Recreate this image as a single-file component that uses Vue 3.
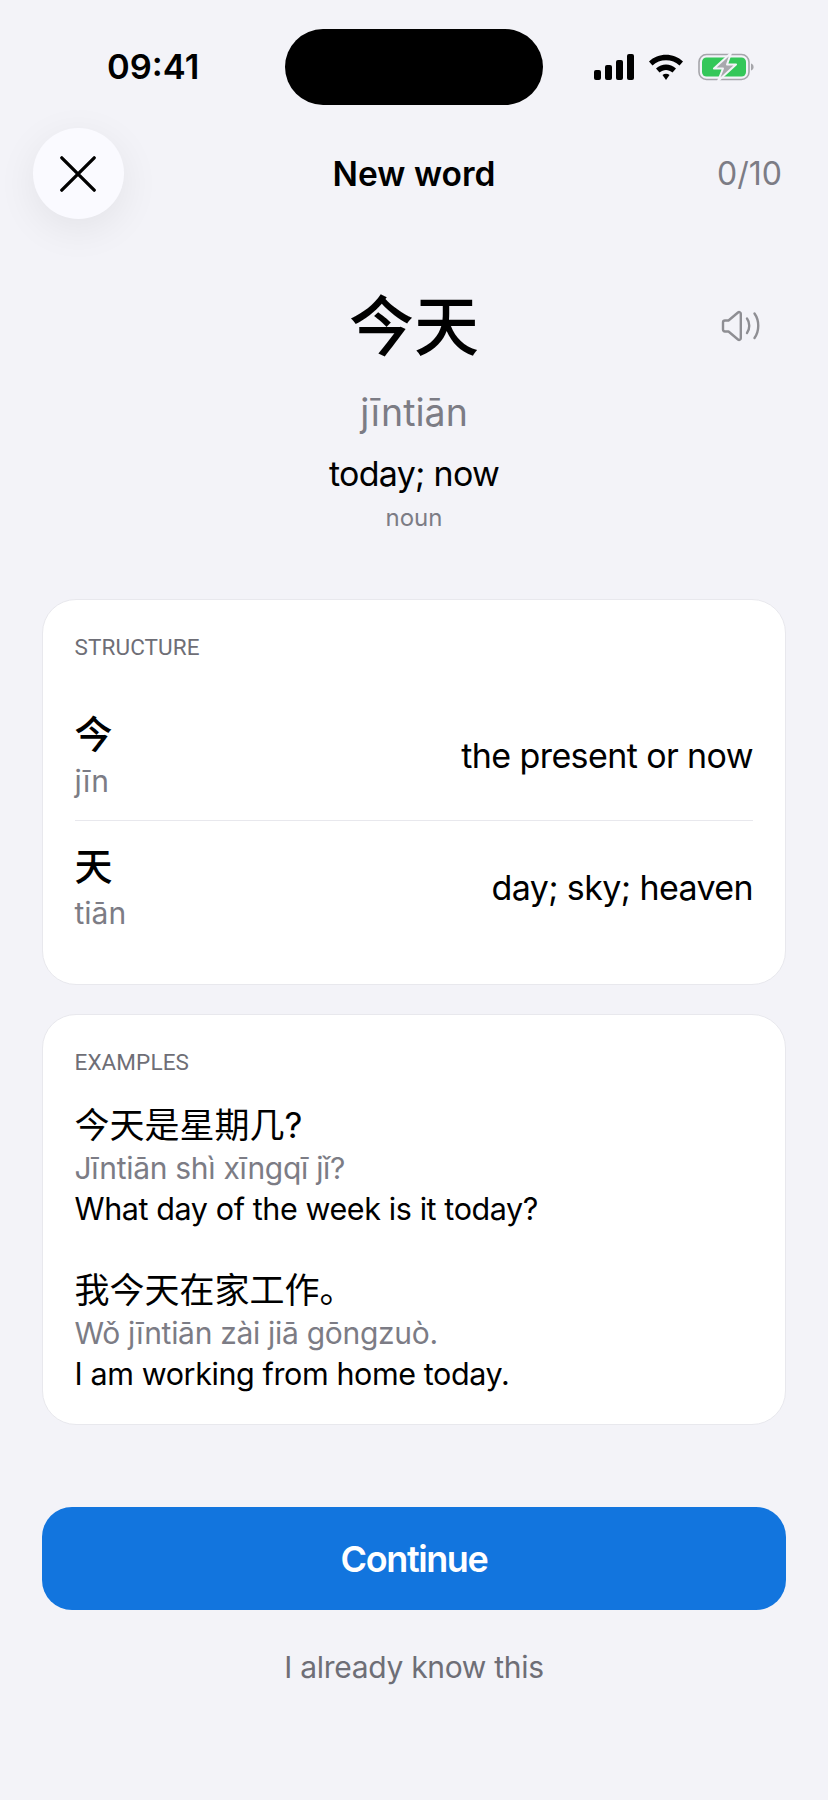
<template>
  <div class="screen">
    <div class="status-bar">
      <span class="time">09:41</span>
      <div class="notch"></div>
      <div class="status-icons">
        <svg class="signal" width="40" height="26" viewBox="0 0 40 26">
          <rect x="0" y="16" width="7" height="10" rx="2" />
          <rect x="11" y="11" width="7" height="15" rx="2" />
          <rect x="22" y="6" width="7" height="20" rx="2" />
          <rect x="33" y="0" width="7" height="26" rx="2" />
        </svg>
        <svg class="wifi" width="34" height="26" viewBox="0 0 34 26">
          <path d="M0 7.500C9-1.500 25-1.500 34 7.500L30.500 11.500C23.500 4.500 10.500 4.500 3.500 11.500Z" />
          <path d="M7 14.500C13 9 21 9 27 14.500L23.500 18.500C19.500 15 14.500 15 10.500 18.500Z" />
          <path d="M13.500 21C15.500 19.200 18.500 19.200 20.500 21L17 26Z" />
        </svg>
        <svg class="battery" width="56" height="28" viewBox="0 0 56 28">
          <rect x="1" y="1.500" width="50" height="25" rx="7.500" fill="none" stroke="#a5a5aa" stroke-width="1.600" />
          <rect x="4" y="4.500" width="44" height="19" rx="4.500" fill="#34c759" />
          <path d="M53 10.500c1.600.4 2.600 1.800 2.600 3.500s-1 3.100-2.600 3.500z" fill="#a5a5aa" />
          <path d="M33 0L16 15.500H25L20 28L38 11.500H29Z" fill="#a8a8ad" stroke="#f3f3f8" stroke-width="2" stroke-linejoin="round" />
        </svg>
      </div>
    </div>

    <header class="nav">
      <button class="close-btn" aria-label="Close">
        <svg width="36" height="36" viewBox="0 0 36 36">
          <path d="M1.800 1.800L34.200 34.200M34.200 1.800L1.800 34.200" stroke="#000" stroke-width="3.300" stroke-linecap="round" fill="none" />
        </svg>
      </button>
      <div class="nav-title">New word</div>
      <div class="progress">0/10</div>
    </header>

    <section class="hero">
      <div class="word-row">
        <div></div>
        <div class="word">今天</div>
        <svg class="speaker" width="40" height="32" viewBox="0 0 40 32" fill="none" stroke="#8e8e93" stroke-width="2.400" stroke-linecap="round" stroke-linejoin="round">
          <path d="M2 12.500q0-2 2-2h3.500L17 2.500c1.200-1 2.800-.2 2.800 1.300v24.400c0 1.500-1.600 2.300-2.800 1.300L7.500 21.500H4q-2 0-2-2z" />
          <path d="M26 8.500c3 4 3 10.500 0 14.500" />
          <path d="M33.500 3.500c5 7 5 17.500 0 24.500" />
        </svg>
      </div>
      <div class="pinyin">jīntiān</div>
      <div class="meaning">today; now</div>
      <div class="pos">noun</div>
    </section>

    <section class="card structure">
      <div class="card-label">STRUCTURE</div>
      <div class="parts">
        <div v-for="part in parts" :key="part.char" class="part-row">
          <div class="part-left">
            <div class="part-char">{{ part.char }}</div>
            <div class="part-pinyin">{{ part.pinyin }}</div>
          </div>
          <div class="part-meaning">{{ part.meaning }}</div>
        </div>
      </div>
    </section>

    <section class="card examples">
      <div class="card-label">EXAMPLES</div>
      <div v-for="ex in examples" :key="ex.zh" class="example">
        <div class="ex-zh">{{ ex.zh }}</div>
        <div class="ex-pinyin">{{ ex.pinyin }}</div>
        <div class="ex-en">{{ ex.en }}</div>
      </div>
    </section>

    <button class="continue-btn">Continue</button>
    <div class="skip">I already know this</div>
  </div>
</template>

<script setup>
const parts = [
  { char: '今', pinyin: 'jīn', meaning: 'the present or now' },
  { char: '天', pinyin: 'tiān', meaning: 'day; sky; heaven' }
]

const examples = [
  { zh: '今天是星期几?', pinyin: 'Jīntiān shì xīngqī jǐ?', en: 'What day of the week is it today?' },
  { zh: '我今天在家工作。', pinyin: 'Wǒ jīntiān zài jiā gōngzuò.', en: 'I am working from home today.' }
]
</script>

<style>
body {
  background: #f3f3f8;
}
</style>

<style scoped>
.screen {
  width: 828px;
  height: 1800px;
  overflow: hidden;
  background: #f3f3f8;
  color: #000;
  font-family: Inter, "Noto Sans CJK SC", sans-serif;
}

.status-bar {
  display: grid;
  grid-template-columns: 1fr 258px 1fr;
  padding-top: 29px;
  height: 75px;
}

.time {
  padding-left: 107px;
  font-size: 34.5px;
  font-weight: 600;
  line-height: 76px;
}

.notch {
  background: #000;
  border-radius: 38px;
}

.status-icons {
  display: flex;
  align-items: center;
  gap: 15px;
  padding-left: 51px;
}

.signal,
.wifi {
  fill: #000;
}

.nav {
  display: grid;
  grid-template-columns: 1fr auto 1fr;
  align-items: center;
  height: 90px;
  margin-top: 24px;
  padding: 0 46px;
}

.close-btn {
  display: flex;
  align-items: center;
  justify-content: center;
  width: 91px;
  height: 91px;
  margin-left: -13px;
  padding: 0 2px 0 0;
  border: none;
  border-radius: 50%;
  background: #fafaff;
  box-shadow: 0 10px 40px rgba(0, 0, 0, 0.07);
}

.nav-title {
  font-size: 33.5px;
  font-weight: 600;
}

.progress {
  justify-self: end;
  font-size: 32px;
  color: #7c7c85;
}

.hero {
  margin-top: 69px;
  text-align: center;
}

.word-row {
  display: grid;
  grid-template-columns: 1fr auto 1fr;
  align-items: center;
  padding: 0 67px;
}

.word {
  font-size: 65px;
  font-weight: 500;
  line-height: 80px;
}

.speaker {
  justify-self: end;
  margin-top: -3px;
}

.pinyin {
  margin-top: 23px;
  font-size: 37.5px;
  line-height: 46px;
  color: #7c7c85;
}

.meaning {
  margin-top: 16px;
  font-size: 34px;
  line-height: 44px;
  letter-spacing: -0.7px;
}

.pos {
  margin-top: 7px;
  font-size: 24px;
  line-height: 30px;
  color: #7c7c85;
}

.card {
  box-sizing: border-box;
  margin: 0 42px;
  padding: 33.5px 32px 0 31.5px;
  background: #fff;
  border: 1.5px solid #e8e8ed;
  border-radius: 34px;
}

.structure {
  margin-top: 66px;
  height: 386px;
}

.card-label {
  font-family: Roboto, sans-serif;
  font-size: 22.5px;
  line-height: 26px;
  letter-spacing: 0.1px;
  color: #6e6e76;
}

.parts {
  margin-top: 31px;
}

.part-row {
  display: flex;
  justify-content: space-between;
  align-items: center;
  height: 129px;
}

.part-row + .part-row {
  height: 133px;
  border-top: 1.5px solid #e8e8ed;
}

.part-char {
  font-size: 38px;
  font-weight: 500;
  line-height: 46px;
}

.part-pinyin {
  margin-top: 6px;
  font-size: 30px;
  line-height: 36px;
  color: #7c7c85;
}

.part-meaning {
  font-size: 34px;
  letter-spacing: -0.6px;
}

.examples {
  margin-top: 29px;
  height: 411px;
}

.example {
  margin-top: 28px;
}

.example + .example {
  margin-top: 38px;
}

.ex-zh {
  font-size: 35px;
  line-height: 45px;
}

.ex-pinyin {
  font-size: 30px;
  line-height: 40px;
  letter-spacing: -0.3px;
  color: #7c7c85;
}

.ex-en {
  font-size: 30.5px;
  line-height: 42px;
  letter-spacing: -0.4px;
}

.continue-btn {
  display: block;
  width: 744px;
  height: 103px;
  margin: 82px 42px 0;
  padding: 0;
  border: none;
  border-radius: 30px;
  background: #1275de;
  color: #fff;
  font-family: inherit;
  font-size: 36px;
  font-weight: 600;
  letter-spacing: -1.4px;
}

.skip {
  margin-top: 37px;
  text-align: center;
  font-size: 30px;
  line-height: 40px;
  letter-spacing: -0.3px;
  color: #6e6e76;
}
</style>
